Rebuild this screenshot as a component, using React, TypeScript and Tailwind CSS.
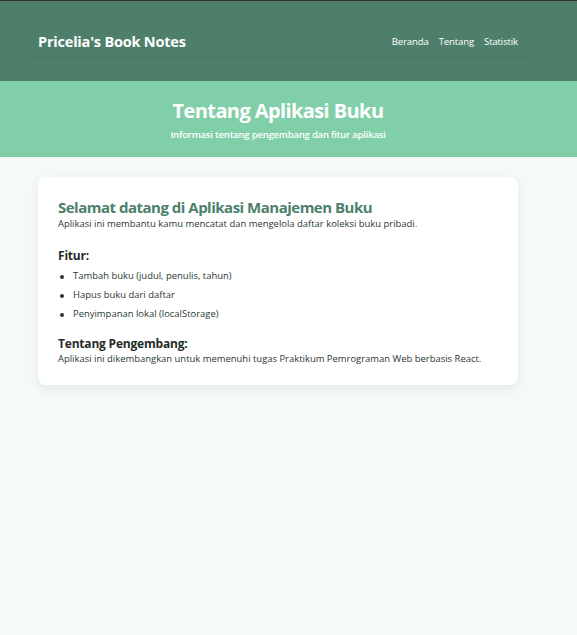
export default function App() {
  return (
    <div className="min-h-[635px] bg-[#f4faf7]" style={{ fontFamily: '"Open Sans", "Noto Sans", sans-serif' }}>
      <header className="border-t border-[#333333] bg-[#4e7f6a] h-[81px] pt-[28px]">
        <nav className="ml-[25px] w-[506px] h-[26px] px-[13px] rounded-lg shadow-[0_2px_6px_rgba(0,0,0,0.05)] flex items-center justify-between">
          <span className="text-white font-bold text-[14.5px] tracking-[-0.2px]">Pricelia's Book Notes</span>
          <div className="flex gap-[10px] text-[9.6px] text-white tracking-[-0.15px]">
            <span>Beranda</span>
            <span>Tentang</span>
            <span>Statistik</span>
          </div>
        </nav>
      </header>
      <section className="bg-[#80cfa9] h-[76px] pt-[15px]">
        <div className="w-[480px] ml-[38px] flex flex-col items-center">
          <h1 className="text-white font-bold text-[20px] leading-[30px] tracking-[-0.6px]">Tentang Aplikasi Buku</h1>
          <p className="text-white text-[9.5px] font-semibold leading-[14px] mt-[2px] tracking-[-0.2px]">Informasi tentang pengembang dan fitur aplikasi</p>
        </div>
      </section>
      <main className="pt-[20px]">
        <div className="ml-[38px] w-[480px] bg-white rounded-lg shadow-[0_4px_12px_rgba(0,0,0,0.07)] px-[20px] pt-[20px] pb-[19px] text-[#2a3832]">
          <h2 className="text-[#4e7f6a] font-bold text-[15px] leading-[20px] tracking-[-0.5px]">Selamat datang di Aplikasi Manajemen Buku</h2>
          <p className="text-[9.45px] leading-[14px]">Aplikasi ini membantu kamu mencatat dan mengelola daftar koleksi buku pribadi.</p>
          <h3 className="font-bold text-[12px] leading-[16px] mt-[17px] text-[#1f2d26] tracking-[-0.2px]">Fitur:</h3>
          <ul className="mt-[3px] text-[9.45px]">
            <li className="flex items-center h-[19px]">
              <span className="w-[4px] h-[4px] rounded-full bg-[#2a3832] ml-[2px] mr-[9px]" />
              Tambah buku (judul, penulis, tahun)
            </li>
            <li className="flex items-center h-[19px]">
              <span className="w-[4px] h-[4px] rounded-full bg-[#2a3832] ml-[2px] mr-[9px]" />
              Hapus buku dari daftar
            </li>
            <li className="flex items-center h-[19px]">
              <span className="w-[4px] h-[4px] rounded-full bg-[#2a3832] ml-[2px] mr-[9px]" />
              Penyimpanan lokal (localStorage)
            </li>
          </ul>
          <h3 className="font-bold text-[12px] leading-[16px] mt-[12px] text-[#1f2d26] tracking-[-0.2px]">Tentang Pengembang:</h3>
          <p className="text-[9.45px] leading-[14px]">Aplikasi ini dikembangkan untuk memenuhi tugas Praktikum Pemrograman Web berbasis React.</p>
        </div>
      </main>
    </div>
  );
}
